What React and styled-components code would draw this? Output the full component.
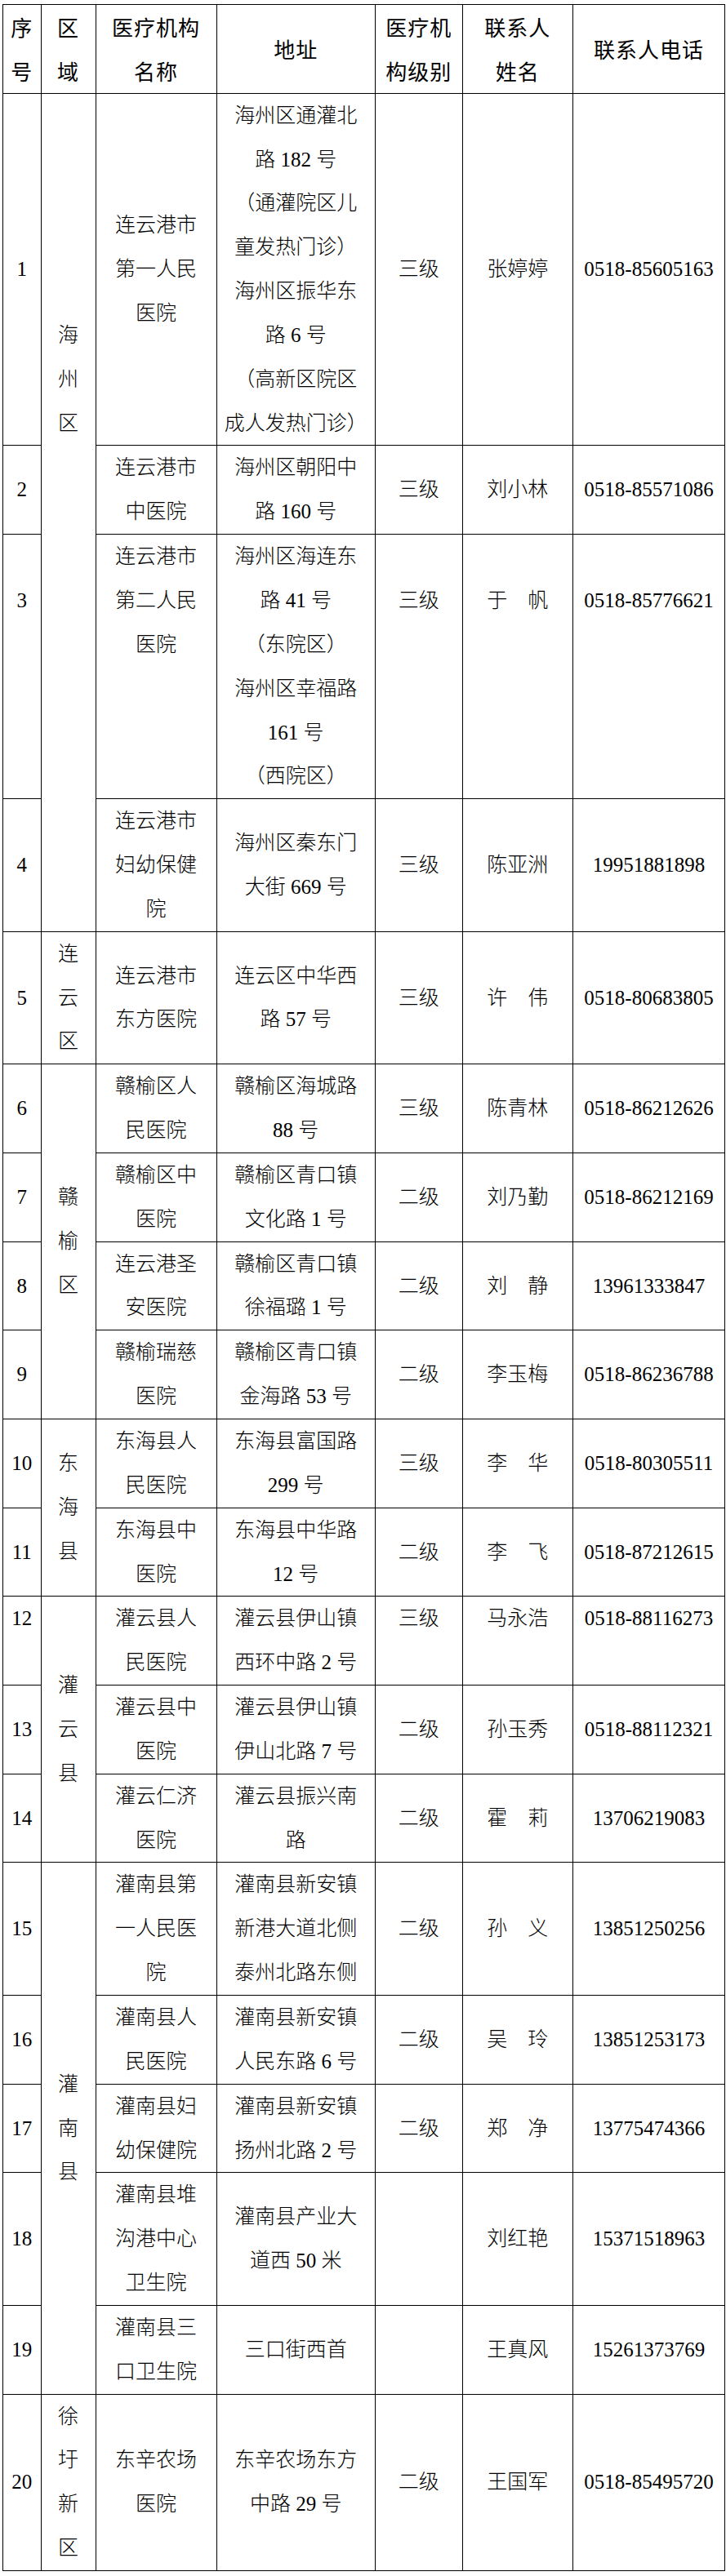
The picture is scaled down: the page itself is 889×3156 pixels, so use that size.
import React from "react";
import styled, { createGlobalStyle } from "styled-components";

// one text line in the sheet, px
const LINE = 53.85;

const GlobalStyle = createGlobalStyle`
  body {
    margin: 0;
    background: #ffffff;
  }
`;

const Sheet = styled.table`
  margin: 5px 0 0 3px;
  width: 884px;
  border-collapse: collapse;
  table-layout: fixed;
  font-family: "Liberation Serif", "Noto Sans CJK SC", serif;
  font-size: 25px;
  color: #000000;
`;

const HeadCell = styled.th`
  border: 1px solid #000000;
  padding: 0;
  font-family: "Noto Sans CJK SC", sans-serif;
  font-weight: 400;
  font-size: 26px;
  letter-spacing: 1px;
  line-height: ${LINE}px;
  text-align: center;
  vertical-align: middle;
  white-space: nowrap;
`;

const Cell = styled.td`
  border: 1px solid #000000;
  padding: ${(p) => (p.$pad || 0) * LINE}px 0 0 0;
  line-height: ${LINE}px;
  text-align: center;
  vertical-align: ${(p) => (p.$top ? "top" : "middle")};
  font-weight: 300;
  white-space: nowrap;
`;

const Line = styled.span`
  display: block;
`;

const widths = [46.5, 67, 148, 194.5, 106.5, 135.5, 186];

const head = [
  ["序", "号"],
  ["区", "域"],
  ["医疗机构", "名称"],
  ["地址"],
  ["医疗机", "构级别"],
  ["联系人", "姓名"],
  ["联系人电话"],
];

// region: text, span (rows), pad (lines from top, when not centred)
const rows = [
  {
    no: "1",
    region: { text: "海州区", span: 4, pad: 5 },
    name: ["连云港市", "第一人民", "医院"],
    addr: [
      "海州区通灌北",
      "路 182 号",
      "（通灌院区儿",
      "童发热门诊）",
      "海州区振华东",
      "路 6 号",
      "（高新区院区",
      "成人发热门诊）",
    ],
    level: "三级",
    contact: "张婷婷",
    phone: "0518-85605163",
  },
  {
    no: "2",
    name: ["连云港市", "中医院"],
    addr: ["海州区朝阳中", "路 160 号"],
    level: "三级",
    contact: "刘小林",
    phone: "0518-85571086",
  },
  {
    no: "3",
    name: ["连云港市", "第二人民", "医院"],
    nameTop: true,
    addr: ["海州区海连东", "路 41 号", "（东院区）", "海州区幸福路", "161 号", "（西院区）"],
    level: "三级",
    contact: "于　帆",
    phone: "0518-85776621",
    top: true,
    pad: 1,
  },
  {
    no: "4",
    name: ["连云港市", "妇幼保健", "院"],
    addr: ["海州区秦东门", "大街 669 号"],
    level: "三级",
    contact: "陈亚洲",
    phone: "19951881898",
  },
  {
    no: "5",
    region: { text: "连云区", span: 1 },
    name: ["连云港市", "东方医院"],
    addr: ["连云区中华西", "路 57 号"],
    level: "三级",
    contact: "许　伟",
    phone: "0518-80683805",
  },
  {
    no: "6",
    region: { text: "赣榆区", span: 4 },
    name: ["赣榆区人", "民医院"],
    addr: ["赣榆区海城路", "88 号"],
    level: "三级",
    contact: "陈青林",
    phone: "0518-86212626",
  },
  {
    no: "7",
    name: ["赣榆区中", "医院"],
    addr: ["赣榆区青口镇", "文化路 1 号"],
    level: "二级",
    contact: "刘乃勤",
    phone: "0518-86212169",
  },
  {
    no: "8",
    name: ["连云港圣", "安医院"],
    addr: ["赣榆区青口镇", "徐福璐 1 号"],
    level: "二级",
    contact: "刘　静",
    phone: "13961333847",
  },
  {
    no: "9",
    name: ["赣榆瑞慈", "医院"],
    addr: ["赣榆区青口镇", "金海路 53 号"],
    level: "二级",
    contact: "李玉梅",
    phone: "0518-86236788",
  },
  {
    no: "10",
    region: { text: "东海县", span: 2 },
    name: ["东海县人", "民医院"],
    addr: ["东海县富国路", "299 号"],
    level: "三级",
    contact: "李　华",
    phone: "0518-80305511",
  },
  {
    no: "11",
    name: ["东海县中", "医院"],
    addr: ["东海县中华路", "12 号"],
    level: "二级",
    contact: "李　飞",
    phone: "0518-87212615",
  },
  {
    no: "12",
    region: { text: "灌云县", span: 3 },
    name: ["灌云县人", "民医院"],
    addr: ["灌云县伊山镇", "西环中路 2 号"],
    level: "三级",
    contact: "马永浩",
    phone: "0518-88116273",
    top: true,
  },
  {
    no: "13",
    name: ["灌云县中", "医院"],
    addr: ["灌云县伊山镇", "伊山北路 7 号"],
    level: "二级",
    contact: "孙玉秀",
    phone: "0518-88112321",
  },
  {
    no: "14",
    name: ["灌云仁济", "医院"],
    addr: ["灌云县振兴南", "路"],
    level: "二级",
    contact: "霍　莉",
    phone: "13706219083",
  },
  {
    no: "15",
    region: { text: "灌南县", span: 5 },
    name: ["灌南县第", "一人民医", "院"],
    addr: ["灌南县新安镇", "新港大道北侧", "泰州北路东侧"],
    level: "二级",
    contact: "孙　义",
    phone: "13851250256",
  },
  {
    no: "16",
    name: ["灌南县人", "民医院"],
    addr: ["灌南县新安镇", "人民东路 6 号"],
    level: "二级",
    contact: "吴　玲",
    phone: "13851253173",
  },
  {
    no: "17",
    name: ["灌南县妇", "幼保健院"],
    addr: ["灌南县新安镇", "扬州北路 2 号"],
    level: "二级",
    contact: "郑　净",
    phone: "13775474366",
  },
  {
    no: "18",
    name: ["灌南县堆", "沟港中心", "卫生院"],
    addr: ["灌南县产业大", "道西 50 米"],
    level: "",
    contact: "刘红艳",
    phone: "15371518963",
  },
  {
    no: "19",
    name: ["灌南县三", "口卫生院"],
    addr: ["三口街西首"],
    level: "",
    contact: "王真风",
    phone: "15261373769",
  },
  {
    no: "20",
    region: { text: "徐圩新区", span: 1 },
    name: ["东辛农场", "医院"],
    addr: ["东辛农场东方", "中路 29 号"],
    level: "二级",
    contact: "王国军",
    phone: "0518-85495720",
  },
];

const Lines = ({ items }) => items.map((t, i) => <Line key={i}>{t}</Line>);

const App = () => {
  return (
    <>
      <GlobalStyle />
      <Sheet>
        <colgroup>
          {widths.map((w, i) => (
            <col key={i} style={{ width: w }} />
          ))}
        </colgroup>
        <thead>
          <tr>
            {head.map((h, i) => (
              <HeadCell key={i}>
                <Lines items={h} />
              </HeadCell>
            ))}
          </tr>
        </thead>
        <tbody>
          {rows.map((r) => (
            <tr key={r.no}>
              <Cell $top={r.top} $pad={r.pad}>{r.no}</Cell>
              {r.region && (
                <Cell
                  rowSpan={r.region.span}
                  $top={r.region.pad != null}
                  $pad={r.region.pad}
                >
                  <Lines items={r.region.text.split("")} />
                </Cell>
              )}
              <Cell $top={r.nameTop}>
                <Lines items={r.name} />
              </Cell>
              <Cell>
                <Lines items={r.addr} />
              </Cell>
              <Cell $top={r.top} $pad={r.pad}>{r.level}</Cell>
              <Cell $top={r.top} $pad={r.pad}>{r.contact}</Cell>
              <Cell $top={r.top} $pad={r.pad}>{r.phone}</Cell>
            </tr>
          ))}
        </tbody>
      </Sheet>
    </>
  );
};

export default App;
